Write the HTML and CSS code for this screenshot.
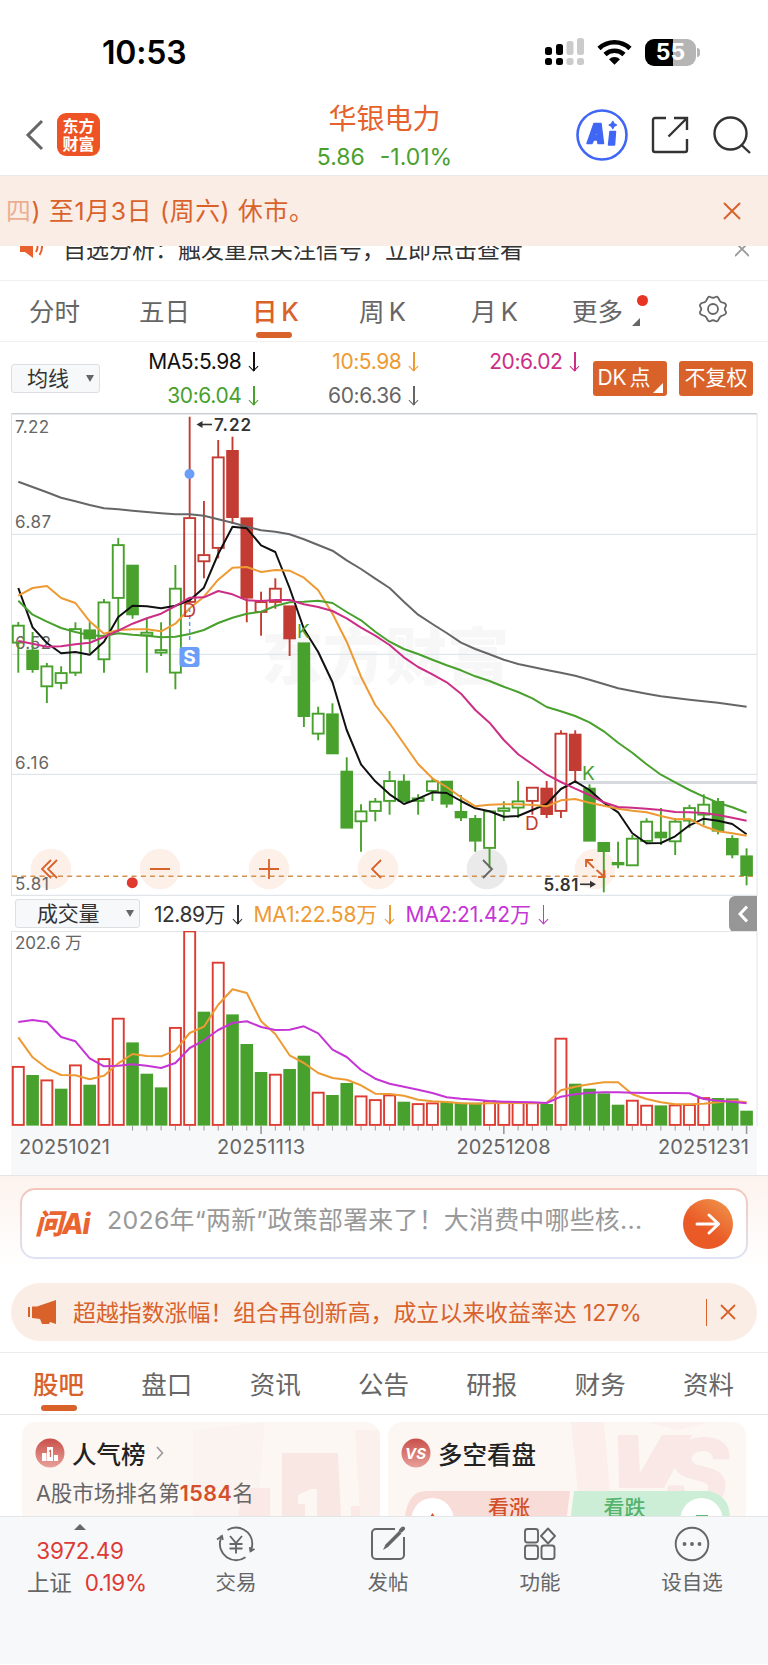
FILE: index.html
```html
<!DOCTYPE html>
<html lang="zh-CN">

<head>
  <meta charset="UTF-8">
  <meta name="viewport" content="width=device-width, initial-scale=1.0">
  <title>华银电力</title>
  <link rel="stylesheet" href="styles.css">
</head>

<body>
  <div class="status-bar">
    <span class="clock">10:53</span>
    <div class="status-icons">
      <svg width="40" height="28" viewBox="0 0 40 28">
        <g fill="#000">
          <rect x="0" y="9" width="7" height="8" rx="2.5" />
          <rect x="11" y="6" width="7" height="11" rx="2.5" />
          <rect x="0" y="20" width="7" height="7" rx="2.5" />
          <rect x="11" y="20" width="7" height="7" rx="2.5" />
        </g>
        <g fill="#cbcbcb">
          <rect x="21.500" y="3" width="7" height="14" rx="2.500" />
          <rect x="32" y="0" width="7" height="17" rx="2.500" />
          <rect x="21.500" y="20" width="7" height="7" rx="2.500" />
          <rect x="32" y="20" width="7" height="7" rx="2.500" />
        </g>
      </svg>
      <svg class="wifi" width="35" height="26" viewBox="0 0 35 26">
        <g fill="none" stroke="#000" stroke-width="4.600">
          <path d="M2 9.500a22.500 22.500 0 0 1 31 0" />
          <path d="M8 15.500a14 14 0 0 1 19 0" />
        </g>
        <path d="M12 20.200a8 8 0 0 1 11 0L17.500 25.800z" fill="#000" />
      </svg>
      <div class="battery"><span>55</span></div>
      <i class="battery-tip"></i>
    </div>
  </div>

  <header class="navbar">
    <div class="nav-left">
      <svg width="20" height="32" viewBox="0 0 20 32" fill="none" stroke="#666" stroke-width="3">
        <path d="M17 2L3 16l14 14" />
      </svg>
      <div class="logo">东方<br>财富</div>
    </div>
    <div class="stock">
      <h1>华银电力</h1>
      <p>5.86<span>-1.01%</span></p>
    </div>
    <div class="nav-right">
      <svg width="52" height="52" viewBox="0 0 52 52">
        <circle cx="26" cy="26" r="24.500" fill="none" stroke="#4066f5" stroke-width="2.600" />
        <g fill="#4066f5" stroke="#4066f5" stroke-width="1.500" stroke-linejoin="round">
          <path fill-rule="evenodd" d="M18 14.500h7l2.500 20h-5.500l-.5-3.500h-4l-1.500 3.500h-5zM20.800 20.500l-2 6h2.500z" />
          <path d="M34 22.500h5.500l-1 13.500h-6z" />
          <path d="M36.800 12.500l1.200 2.400 2.300 1.100-2.300 1.200-1.200 2.300-1.200-2.300-2.300-1.200 2.300-1.100z" />
        </g>
      </svg>
      <svg class="share" width="38" height="38" viewBox="0 0 38 38" fill="none" stroke="#333" stroke-width="2.400">
        <path d="M15 2H4a2 2 0 0 0-2 2v30a2 2 0 0 0 2 2h30a2 2 0 0 0 2-2V23" />
        <path d="M23 2h13v12M36 2L17.500 20.500" />
      </svg>
      <svg class="search" width="38" height="38" viewBox="0 0 38 38" fill="none" stroke="#333" stroke-width="2.400">
        <circle cx="17.500" cy="17.500" r="16" />
        <path d="M28.500 29L37 37" />
      </svg>
    </div>
  </header>

  <div class="notice">
    <p><span>四</span>) 至1月3日 (周六) 休市。</p>
    <svg width="18" height="18" viewBox="0 0 18 18" stroke="#d9622b" stroke-width="2">
      <path d="M1 1l16 16M17 1L1 17" />
    </svg>
  </div>

  <div class="ticker">
    <svg class="horn" width="24" height="24" viewBox="0 0 24 24">
      <path d="M0 7h5l8-6v22l-8-6H0z" fill="#e8612c" />
      <path d="M16 7q3 5 0 10M19.500 4q5 8 0 16" fill="none" stroke="#e8612c" stroke-width="2" />
    </svg>
    <p>自选分析：触发重点关注信号，立即点击查看</p>
    <svg width="14" height="18" viewBox="0 0 14 18" stroke="#999" stroke-width="1.800">
      <path d="M0 2l14 14M14 2L0 16" />
    </svg>
  </div>

  <nav class="period-tabs">
    <span>分时</span>
    <span>五日</span>
    <span class="active">日 K</span>
    <span>周 K</span>
    <span>月 K</span>
    <span class="more">更多</span>
    <svg width="30" height="28" viewBox="0 0 30 28" fill="none" stroke="#666" stroke-width="1.800" stroke-linejoin="round">
      <path d="M10 2.500q1-1.500 2.500-.5 2.500 1.500 5 0Q19 1 20 2.500l2 3.500q1 1.500 3 1.700 2 .3 2.700 1.600.8 1.500-.2 2.700-1.500 2 0 4 1 1.200.2 2.700-.7 1.300-2.700 1.600-2 .2-3 1.700l-2 3.500q-1 1.500-2.500.5-2.500-1.500-5 0Q11 27 10 25.500L8 22q-1-1.500-3-1.700-2-.3-2.700-1.600-.8-1.500.2-2.700 1.500-2 0-4-1-1.200-.2-2.700Q3 8 5 7.700 7 7.500 8 6z" />
      <circle cx="15" cy="14" r="5" />
    </svg>
  </nav>

  <div class="ma-bar">
    <div class="select">均线<i></i></div>
    <div class="ma-values">
      <span class="ma5">MA5:5.98<b></b></span>
      <span class="ma10">10:5.98<b></b></span>
      <span class="ma20">20:6.02<b></b></span>
      <span class="ma30">30:6.04<b></b></span>
      <span class="ma60">60:6.36<b></b></span>
    </div>
    <div class="btn dk">DK 点</div>
    <div class="btn">不复权</div>
  </div>

  <svg id="kline" class="chart" width="768" height="483" viewBox="0 413 768 483"></svg>

  <div class="vol-bar">
    <div class="select">成交量<i></i></div>
    <span class="vol">12.89万<b></b></span>
    <span class="ma10">MA1:22.58万<b></b></span>
    <span class="vma2">MA2:21.42万<b></b></span>
    <div class="collapse">
      <svg width="10" height="18" viewBox="0 0 10 18" fill="none" stroke="#fff" stroke-width="3">
        <path d="M9 1.500L2 9l7 7.500" />
      </svg>
    </div>
  </div>

  <svg id="volume" class="chart" width="768" height="244" viewBox="0 931 768 244"></svg>

  <section class="ask">
    <div class="ask-box">
      <div class="ask-logo">问Ai</div>
      <p>2026年“两新”政策部署来了！大消费中哪些核...</p>
      <div class="go">
        <svg width="26" height="24" viewBox="0 0 26 24" fill="none" stroke="#fff" stroke-width="3" stroke-linecap="round" stroke-linejoin="round">
          <path d="M2 12h21M14 3l9.500 9-9.500 9" />
        </svg>
      </div>
    </div>
  </section>

  <div class="promo">
    <svg width="28" height="24" viewBox="0 0 28 24" fill="#d9622b">
      <path d="M0 7h2v10H0zM4 6.500h5L28 0v24l-6-2-1 2h-7l-2-5-8-1z" />
    </svg>
    <p>超越指数涨幅！组合再创新高，成立以来收益率达 127%</p>
    <i></i>
    <svg width="16" height="16" viewBox="0 0 16 16" stroke="#d9622b" stroke-width="1.800">
      <path d="M1 1l14 14M15 1L1 15" />
    </svg>
  </div>

  <nav class="info-tabs">
    <span class="active">股吧</span>
    <span>盘口</span>
    <span>资讯</span>
    <span>公告</span>
    <span>研报</span>
    <span>财务</span>
    <span>资料</span>
  </nav>

  <section class="cards">
    <div class="card rank">
      <svg class="card-bg" width="358" height="96" viewBox="0 0 358 96">
        <path d="M171 8l72-8-8 96h-64z" fill="#fbf3ef" />
        <path fill-rule="evenodd" d="M260 31h56l3 65h-59zM276 73v9h7v14h12V67h-6z" fill="#f9e7e4" />
        <path d="M221 66h27v30h-32zM329 84h24v12h-24z" fill="#fae9e6" />
        <path d="M333 8h25v88h-20z" fill="#fbf0ec" />
      </svg>
      <h2>
        <svg width="30" height="30" viewBox="0 0 30 30">
          <circle cx="15" cy="15" r="14.500" fill="url(#badge)" />
          <path d="M7 15h4.500v8H7zM12 9h6v14h-6zM19 17h4v6h-4z" fill="#fff" />
          <path d="M14 13.500l1.500-1V19" fill="none" stroke="#d4655d" stroke-width="1.300" />
        </svg>
        人气榜
        <svg class="arrow" width="8" height="14" viewBox="0 0 8 14" fill="none" stroke="#999" stroke-width="1.600">
          <path d="M1 1l5.500 6L1 13" />
        </svg>
      </h2>
      <p>A股市场排名第<b>1584</b>名</p>
    </div>
    <div class="card vs">
      <svg class="card-bg" width="358" height="96" viewBox="0 0 358 96">
        <path d="M183 0h33l6 70h-32z" fill="#fbeeeb" />
        <path d="M258 0h64l-32 8z" fill="#fcf1ee" />
        <path d="M230 13h20l2 38 22-38h30l-28 53h-45z" fill="#f9e8e5" />
        <text x="277" y="87" class="bg-s">S</text>
      </svg>
      <h2>
        <svg width="30" height="30" viewBox="0 0 30 30">
          <circle cx="15" cy="15" r="14.500" fill="url(#badge)" />
          <text x="14.500" y="20.500" text-anchor="middle" class="badge-vs">VS</text>
        </svg>
        多空看盘
      </h2>
      <svg class="vote" width="326" height="28" viewBox="404 1490 326 28">
        <path d="M426 1491h144l-5 40H404q0-40 22-40z" fill="#f8dcd8" />
        <path d="M574 1491h134q22 4 22 27v12H569z" fill="#cdeed6" />
        <circle cx="432.500" cy="1519" r="21" fill="#fff" />
        <circle cx="701.500" cy="1519" r="21" fill="#fff" />
        <path d="M432.500 1513l5 8h-10z" fill="#d4502a" />
        <rect x="696" y="1515" width="12" height="6" fill="#62b877" />
        <text x="488" y="1515" fill="#d4502a">看涨</text>
        <text x="603.500" y="1515" fill="#55b36d">看跌</text>
      </svg>
    </div>
  </section>

  <footer class="bottom-bar">
    <div class="index">
      <i></i>
      <p>3972.49</p>
      <p class="change"><span>上证</span>0.19%</p>
    </div>
    <div class="item">
      <svg width="40" height="36" viewBox="0 0 40 36" fill="none" stroke="#666" stroke-width="1.900">
        <path d="M11.500 4A16.300 16.300 0 0 1 36.300 18q0 4-1.700 7.200M29.500 31.300A16.300 16.300 0 0 1 4.500 13.500l.7-3.800" />
        <path d="M38.500 23l-4 2.200-.7-4M1 13.500l5-3.500.8 4" />
        <path d="M14 10l6 7 6-7M13.500 18h13M13.500 22.500h13M20 17v10.500" />
      </svg>
      <span>交易</span>
    </div>
    <div class="item">
      <svg width="36" height="36" viewBox="0 0 36 36" fill="none" stroke="#666" stroke-width="2">
        <path d="M25 3H6a4 4 0 0 0-4 4v22a4 4 0 0 0 4 4h24a4 4 0 0 0 4-4V11" />
        <path d="M31 4.500l2-2" stroke-width="4" stroke-linecap="round" />
        <path d="M29 5l2.500 2.500L18 21l-5 3 2.500-5.500z" fill="#666" stroke="none" />
      </svg>
      <span>发帖</span>
    </div>
    <div class="item">
      <svg width="34" height="36" viewBox="0 0 34 36" fill="none" stroke="#666" stroke-width="1.900" stroke-linejoin="round">
        <rect x="2" y="3" width="13" height="13.500" rx="2.500" />
        <rect x="2" y="19.500" width="13" height="13.500" rx="2.500" />
        <rect x="18.500" y="19.500" width="13" height="13.500" rx="2.500" />
        <path d="M25 2.500l7 7.500-7 7.500-7-7.500z" />
      </svg>
      <span>功能</span>
    </div>
    <div class="item">
      <svg width="36" height="36" viewBox="0 0 36 36" fill="none" stroke="#666" stroke-width="1.900">
        <circle cx="18" cy="18" r="16.300" />
        <path d="M10.500 18h.01M18 18h.01M25.500 18h.01" stroke-width="3.800" stroke-linecap="round" />
      </svg>
      <span>设自选</span>
    </div>
  </footer>

  <svg class="defs" width="0" height="0">
    <linearGradient id="badge" x1="0" y1="0" x2="0" y2="1">
      <stop offset="0" stop-color="#c9504a" />
      <stop offset="1" stop-color="#e8a09a" />
    </linearGradient>
  </svg>

  <script src="script.js"></script>
</body>

</html>
```
FILE: styles.css
```css
* {
  margin: 0;
  padding: 0;
  box-sizing: border-box;
}

body {
  width: 768px;
  height: 1665px;
  overflow: hidden;
  background: #fff;
  color: #666;
  font-family: Inter, "Noto Sans CJK SC", sans-serif;
  font-size: 22px;
}

svg {
  display: block;
  flex: none;
}

.defs {
  position: absolute;
}

/* status bar */
.status-bar {
  display: flex;
  justify-content: space-between;
  align-items: center;
  height: 80px;
  padding: 24px 68px 0 102px;
}

.clock {
  color: #000;
  font-size: 32px;
  font-weight: 600;
  letter-spacing: -0.2px;
}

.status-icons {
  display: flex;
  align-items: center;
}

.wifi {
  margin: 0 13px 0 12px;
}

.battery {
  width: 51px;
  height: 27px;
  border-radius: 9px;
  background: linear-gradient(90deg, #000 55%, #b5b5b5 55%);
  color: #fff;
  font-size: 23px;
  font-weight: 700;
  line-height: 27px;
  text-align: center;
}

.battery-tip {
  width: 3px;
  height: 9px;
  margin-left: 1px;
  border-radius: 0 4px 4px 0;
  background: #b5b5b5;
}

/* navbar */
.navbar {
  display: grid;
  grid-template-columns: 1fr auto 1fr;
  align-items: center;
  height: 96px;
  padding: 14px 17px 0 25px;
  border-bottom: 1px solid #e9e9e9;
}

.nav-left,
.nav-right {
  display: flex;
  align-items: center;
}

.nav-right {
  justify-content: flex-end;
}

.logo {
  width: 43px;
  height: 43px;
  margin-left: 12px;
  padding-top: 3px;
  border-radius: 9px;
  background: #ed5325;
  color: #fff;
  font-family: "Noto Sans CJK SC", sans-serif;
  font-size: 16px;
  font-weight: 700;
  line-height: 18px;
  text-align: center;
}

.stock {
  margin-left: -7px;
  padding-top: 5px;
  text-align: center;
}

.stock h1 {
  color: #e5622c;
  font-size: 28px;
  font-weight: 400;
  line-height: 40px;
}

.stock p {
  color: #48a02d;
  font-size: 23px;
  line-height: 36px;
}

.stock span {
  margin-left: 15px;
}

.share {
  margin: 0 24px 0 23px;
}

/* scrolling notice */
.notice {
  display: flex;
  justify-content: space-between;
  align-items: center;
  height: 70px;
  padding: 0 27px 0 6px;
  background: #faede6;
  color: #d9622b;
  font-size: 24.8px;
  letter-spacing: 0.7px;
}

.notice p {
  margin-top: -5px;
}

.notice span {
  opacity: 0.45;
}

/* the row is partly covered by the notice above it */
.ticker {
  display: flex;
  align-items: flex-start;
  height: 35px;
  padding: 0 19px 0 20px;
  border-bottom: 1px solid #efefef;
  color: #333;
  overflow: hidden;
}

.ticker svg {
  margin-top: -6px;
}

.ticker .horn {
  margin-top: -11px;
}

.ticker p {
  flex: 1;
  margin: -13px 0 0 19px;
  font-size: 23px;
  line-height: 34px;
}

/* period tabs */
.period-tabs {
  display: flex;
  align-items: center;
  height: 61px;
  padding: 0 0 4px 29px;
  border-bottom: 1px solid #f1f1f1;
  font-size: 25.5px;
  word-spacing: -3px;
}

.period-tabs span {
  position: relative;
  width: 110px;
  white-space: nowrap;
}

.period-tabs span:nth-child(3) {
  width: 107px;
  margin-left: 3px;
}

.period-tabs span:nth-child(4) {
  width: 112px;
}

.period-tabs span:nth-child(5) {
  width: 101px;
}

.period-tabs .more {
  width: 126px;
}

.active {
  position: relative;
  color: #d9622b;
  font-weight: 500;
}

.active::after {
  content: "";
  position: absolute;
  left: 4px;
  bottom: -10px;
  width: 36px;
  height: 6px;
  border-radius: 3px;
  background: #d9622b;
}

.more::before {
  content: "";
  position: absolute;
  left: 65px;
  top: 4px;
  width: 11px;
  height: 11px;
  border-radius: 50%;
  background: #e93323;
}

.more::after {
  content: "";
  position: absolute;
  left: 60px;
  top: 27px;
  border: 4px solid transparent;
  border-right-color: #666;
  border-bottom-color: #666;
}

/* moving average row */
.ma-bar {
  display: flex;
  align-items: center;
  height: 71px;
  padding: 0 15px 0 11px;
}

.select {
  display: flex;
  justify-content: space-between;
  align-items: center;
  width: 89px;
  height: 29px;
  padding: 0 5px 0 15px;
  border: 1px solid #dcdfe3;
  border-radius: 3px;
  background: #f6f8fa;
  color: #333;
  font-size: 21px;
  line-height: 27px;
}

.ma-bar .select {
  margin-top: 2px;
}

.select i {
  border: 4px solid transparent;
  border-top: 7px solid #666;
  border-bottom: 0;
}

.ma-values {
  display: grid;
  grid-template-columns: 160px 160px 161px;
  row-gap: 8px;
  width: 481px;
  padding-top: 2px;
  text-align: right;
  font-size: 21px;
  line-height: 26px;
  letter-spacing: -0.4px;
}

.ma-values span,
.vol-bar span {
  white-space: nowrap;
}

/* thin down arrow after each value */
b {
  font-weight: inherit;
}

.ma-values b,
.vol-bar b {
  display: inline-block;
  position: relative;
  width: 1.6px;
  height: 19px;
  margin: 0 5px 0 12px;
  background: currentColor;
  vertical-align: -2px;
}

.ma-values b::after,
.vol-bar b::after {
  content: "";
  position: absolute;
  left: -3px;
  bottom: 1px;
  width: 6px;
  height: 6px;
  border: solid currentColor;
  border-width: 0 1.5px 1.5px 0;
  transform: rotate(45deg);
}

.ma5 {
  color: #111;
}

.ma10 {
  color: #ee9a33;
}

.ma20 {
  color: #cc2e86;
}

.ma30 {
  color: #48a02d;
}

.ma60 {
  color: #666;
}

.btn {
  position: relative;
  width: 74px;
  height: 35px;
  margin: 2px 0 0 12px;
  border-radius: 3px;
  background: #d9622b;
  color: #fff;
  font-size: 21px;
  line-height: 34px;
  text-align: center;
}

.dk {
  padding-right: 12px;
  word-spacing: -3px;
}

.dk::after {
  content: "";
  position: absolute;
  right: 4px;
  bottom: 3px;
  border: 5px solid transparent;
  border-right-color: #fff;
  border-bottom-color: #fff;
}

/* charts */
.chart text {
  font-family: Inter, "Noto Sans CJK SC", sans-serif;
  font-size: 17px;
  fill: #666;
}

.chart .mark {
  font-weight: 600;
  fill: #333;
}

.chart .date {
  font-size: 20px;
}

.chart .watermark {
  font-family: "Noto Sans CJK SC", sans-serif;
  font-size: 62px;
  font-weight: 900;
  fill: #f7f7f7;
}

.chart .flag-d {
  font-size: 19px;
  fill: #c23c33;
}

.chart .flag-k {
  font-size: 19px;
  fill: #48a02d;
}

.chart .flag-s {
  font-weight: 700;
  font-size: 19px;
  fill: #fff;
}

/* volume header */
.vol-bar {
  display: flex;
  align-items: center;
  height: 35px;
  padding: 0 11px 0 15px;
  font-size: 21px;
  letter-spacing: -0.2px;
}

.vol-bar .select {
  width: 125px;
  padding-left: 21px;
  margin-right: 14px;
}

.vol-bar span {
  margin: -2px 10px 0 0;
}

.vol-bar .vol {
  color: #333;
  letter-spacing: -0.5px;
}

.vma2 {
  color: #c535d6;
}

.collapse {
  display: flex;
  justify-content: center;
  align-items: center;
  width: 28px;
  height: 36px;
  margin-left: auto;
  border-radius: 6px 0 0 6px;
  background: #969696;
}

/* AI question box */
.ask {
  height: 95px;
  padding: 12px 20px 0;
  border-top: 1px solid #e5e5e8;
  background: linear-gradient(#fdf3ee, #fff);
}

.ask-box {
  display: flex;
  align-items: center;
  height: 71px;
  padding: 0 13px;
  border: 2px solid transparent;
  border-radius: 15px;
  background: linear-gradient(#fff, #fff) padding-box, linear-gradient(#f5c5bb, #dde4f5) border-box;
}

.ask-logo {
  width: 60px;
  margin-top: -4px;
  color: #ea6430;
  font-size: 28px;
  font-weight: 800;
  font-style: italic;
  letter-spacing: -1px;
  white-space: nowrap;
}

.ask-box p {
  flex: 1;
  margin: -12px 0 0 12px;
  color: #999;
  font-size: 24.9px;
  letter-spacing: 0.28px;
  white-space: nowrap;
}

.go {
  display: flex;
  justify-content: center;
  align-items: center;
  width: 50px;
  height: 50px;
  border-radius: 50%;
  background: linear-gradient(35deg, #ea5a26 40%, #f0994f);
}

/* promo pill */
.promo {
  display: flex;
  align-items: center;
  height: 58px;
  margin: 13px 11px 11px;
  padding: 0 21px 0 17px;
  border-radius: 29px;
  background: #faede6;
  color: #d9622b;
  font-size: 22.9px;
}

.promo p {
  flex: 1;
  margin: -3px 0 0 17px;
  white-space: nowrap;
}

.promo i {
  width: 1.5px;
  height: 27px;
  margin-right: 13px;
  background: #d9622b;
}

/* info tabs */
.info-tabs {
  display: flex;
  justify-content: space-between;
  align-items: center;
  height: 63px;
  padding: 0 34px 3px 33px;
  border-top: 1px solid #ececf1;
  border-bottom: 1px solid #e6e6e6;
  font-size: 25.5px;
}

.info-tabs .active::after {
  left: 8px;
}

/* cards, cut off by the bottom bar */
.cards {
  display: flex;
  gap: 8px;
  height: 101px;
  padding: 7px 22px 0;
  overflow: hidden;
}

.card {
  position: relative;
  width: 358px;
  height: 120px;
  padding: 14px 14px 0;
  border-radius: 14px;
  background: #fdf7f4;
  overflow: hidden;
}

.card-bg {
  position: absolute;
  left: 0;
  top: 0;
}

.bg-s {
  font-size: 98px;
  font-weight: 800;
  font-style: italic;
  fill: #f9e8e5;
}

.badge-vs {
  font-size: 15px;
  font-weight: 700;
  font-style: italic;
  fill: #fff;
}

.card h2 {
  display: flex;
  position: relative;
  align-items: center;
  gap: 7px;
  height: 34px;
  margin-left: -1px;
  color: #222;
  font-size: 24.5px;
  font-weight: 500;
}

.arrow {
  margin-left: 3px;
}

.card p {
  position: relative;
  margin-top: 7px;
  font-size: 21.5px;
  line-height: 32px;
}

.card p b {
  color: #d4502a;
  font-weight: 600;
  letter-spacing: 0.4px;
}

.vote {
  position: relative;
  margin: 20px 0 0 2px;
}

.vote text {
  font-size: 21px;
  font-weight: 500;
}

/* bottom bar */
.bottom-bar {
  display: flex;
  height: 148px;
  border-top: 1px solid #e4e6e8;
  background: #f6f8fa;
  font-size: 20.5px;
}

.index {
  width: 160px;
  text-align: center;
  color: #dd3a36;
  font-size: 22.5px;
  letter-spacing: -0.2px;
}

.index i {
  display: block;
  width: 12px;
  margin: 7px auto 5px;
  border: 6px solid transparent;
  border-bottom-color: #666;
  border-top: 0;
}

.index p {
  height: 32px;
  line-height: 32px;
}

.index .change {
  padding-left: 14px;
}

.index span {
  margin-right: 13px;
  color: #666;
}

.item {
  display: flex;
  flex-direction: column;
  align-items: center;
  width: 152px;
  padding-top: 9px;
}

.item span {
  margin-top: 7px;
  line-height: 28px;
}
```
FILE: script.js
```js
const GREEN = '#48a02d';
const RED = '#c23c33';
const STEP = 14.28;
const LEFT = 18.3;

// [color, filled, high, body top, body bottom, low, volume top]
const bars = [
  ['g', 0, 622, 625.3, 643, 672.7, 1066.5],
  ['g', 1, 632, 650, 669.7, 672.7, 1075.3],
  ['g', 0, 663, 666, 686.7, 703, 1080],
  ['g', 0, 666.3, 672.7, 683.3, 689.3, 1089],
  ['g', 0, 622.3, 628.7, 673, 676, 1065],
  ['g', 1, 622.3, 629.7, 639, 653, 1085],
  ['g', 0, 599, 602, 659.7, 672.7, 1058.7],
  ['g', 0, 538, 544.7, 598.3, 632, 1018.3],
  ['g', 1, 565, 565, 615, 618.7, 1042.7],
  ['g', 0, 618.7, 632.3, 635.7, 672.7, 1074],
  ['g', 0, 622.3, 649.7, 653, 656, 1087.7],
  ['g', 0, 565, 588.3, 673, 689.3, 1027.5],
  ['r', 0, 416.7, 517.7, 602.3, 602.3, 931],
  ['r', 0, 501, 554.7, 561.7, 578.3, 1012],
  ['r', 0, 440, 457, 548.3, 558.3, 962.3],
  ['r', 1, 436.7, 450.3, 517.7, 524, 1014.7],
  ['r', 1, 517.7, 517.7, 598.3, 622.3, 1044.3],
  ['r', 0, 591.7, 601.7, 612.3, 635.7, 1072.3],
  ['r', 0, 578.3, 588.3, 602.3, 608.7, 1074.3],
  ['r', 1, 605.7, 605.7, 639, 656, 1069.3],
  ['g', 1, 642.7, 642.7, 716.7, 727, 1056],
  ['g', 0, 706.7, 713.3, 734, 740.3, 1092.3],
  ['g', 1, 703.3, 713.7, 754, 754, 1095.3],
  ['g', 1, 757.3, 771, 828.3, 828.3, 1083.3],
  ['g', 0, 804.3, 811, 821.7, 851.7, 1096],
  ['g', 0, 798, 801.3, 811.3, 821.3, 1099.7],
  ['g', 0, 771, 780.7, 801.3, 814.7, 1095],
  ['g', 1, 774.3, 781, 801.7, 801.7, 1102],
  ['g', 0, 794.3, 798, 801.3, 814.7, 1103.7],
  ['g', 0, 778, 781, 791.3, 801, 1103],
  ['g', 1, 781, 781, 804.3, 807.7, 1102],
  ['g', 1, 795, 811.3, 818, 821, 1103],
  ['g', 1, 815, 818.3, 841.3, 851.7, 1103],
  ['g', 0, 811, 811, 848.3, 868.3, 1101],
  ['g', 0, 801.3, 808, 811.3, 821, 1102.7],
  ['g', 0, 781, 801, 808, 818, 1102.7],
  ['r', 0, 787.3, 787.3, 801.3, 814.7, 1102.7],
  ['r', 1, 781, 788, 814.7, 818, 1104.3],
  ['r', 0, 730.3, 733.3, 811.3, 818, 1038.3],
  ['r', 1, 730.3, 734, 770.7, 781.7, 1084],
  ['g', 1, 784.3, 788, 841.3, 841.3, 1089],
  ['g', 1, 842.3, 842.3, 851.7, 892.3, 1093.7],
  ['g', 1, 841.7, 862.3, 865, 868.3, 1105],
  ['g', 0, 835, 838.3, 865.7, 865.7, 1100.3],
  ['g', 0, 818.3, 821.3, 841.3, 844.3, 1105.3],
  ['g', 1, 808, 832, 838, 845, 1105.7],
  ['g', 0, 818.3, 821.3, 841.7, 855, 1105],
  ['g', 0, 804.7, 807.7, 821, 828, 1104.7],
  ['g', 0, 794.3, 804.3, 815, 825, 1097.7],
  ['g', 1, 798, 801.3, 831.3, 834.3, 1098.3],
  ['g', 1, 835.3, 838.3, 855, 858.3, 1098.7],
  ['g', 1, 848.3, 855.7, 875.7, 885.3, 1111]
];

// bars of the volume chart that are drawn hollow
const volumeUp = [0, 2, 4, 6, 7, 11, 12, 14, 18, 21, 24, 25, 26, 28, 29, 33, 34, 35, 36, 38, 43, 44, 46, 47, 48];

const ma = {
  '#666': [481.7, 487, 492.3, 497.7, 501.3, 505, 508.3, 509.3, 510.7, 512, 513.3, 514.3, 514.3, 515.7, 519.3, 522.7, 526.7, 530.3, 531.7, 534.3, 539.3, 545, 550.7, 560.3, 569, 578.7, 588, 601.7, 614.7, 624, 633, 642.7, 649, 654.3, 659.7, 664, 667, 670, 672.7, 675.7, 679.7, 684, 688.3, 691, 693.7, 696.3, 698, 699.7, 701.3, 702.7, 704.7, 706.7],
  '#111': [588, 627.3, 643, 653.3, 652, 654.7, 641.7, 617, 605.7, 606.3, 608.3, 605.7, 600.3, 587.7, 554, 526.7, 528.3, 545.3, 552, 588, 629, 652, 682.3, 730, 764.3, 781.3, 794.3, 804, 798.7, 792.3, 793, 801, 808.3, 811.3, 816.7, 816, 810, 804, 789, 781.3, 790, 802.7, 812.3, 833.3, 843.3, 843, 836.3, 825.3, 818.7, 820.7, 824, 834.3],
  '#ee9a33': [595.7, 588, 586, 598, 603, 621.3, 633.7, 630, 629.3, 629.3, 631.3, 623.7, 608.3, 596.7, 579.7, 567.7, 567, 572, 570, 570.7, 577.7, 590.3, 613.7, 641.7, 676.7, 705, 723.3, 743.7, 764, 778.3, 787, 797.3, 806.3, 804.7, 804.3, 804.3, 805, 806.3, 800.3, 799, 802.7, 805.7, 808.7, 810.7, 812.3, 816, 819.3, 819, 826.3, 831.3, 833.3, 835.7],
  '#48a02d': [600.7, 614.7, 621.7, 628, 632, 635.3, 636, 633.3, 634.7, 635.7, 637.3, 636.7, 634, 630, 623, 617.7, 613.7, 611.7, 606, 602.3, 601.7, 600.7, 603, 612, 620.3, 631.7, 641.7, 649, 654, 659.7, 665.3, 670.3, 676.3, 681, 686.7, 692, 698.3, 707, 711.3, 716, 722.3, 731.3, 742.7, 752.7, 764.3, 774.7, 782.3, 790, 796.7, 802.7, 807.3, 812.7],
  '#cc2e86': [641, 643.7, 646.7, 646.3, 644.3, 642.7, 637, 630.7, 623.7, 618.3, 613.7, 606, 597.7, 597.3, 591, 594.3, 600.3, 601, 600, 600, 604.3, 607, 611, 618.3, 627.7, 635.7, 645, 657.3, 667, 674.3, 682.3, 693.7, 710, 722.7, 740, 754.3, 764.3, 774.7, 782, 788.7, 795, 802.3, 807, 807.7, 808.7, 810, 812, 812.3, 813, 815, 817.7, 820.7]
};

// volume averages, thirds of a pixel from y = 890
const vma = {
  '#ee9a33': [442, 502, 535, 555, 556, 568, 557, 520, 492, 498, 499, 481, 429, 410, 344, 298, 309, 394, 432, 496, 519, 549, 564, 569, 586, 611, 612, 617, 629, 634, 636, 640, 641, 640, 639, 639, 640, 638, 601, 590, 583, 577, 577, 613, 627, 637, 643, 643, 641, 637, 632, 637],
  '#c535d6': [396, 390, 396, 441, 454, 505, 529, 527, 523, 527, 534, 519, 474, 451, 420, 399, 394, 411, 420, 419, 409, 430, 479, 501, 540, 566, 581, 590, 599, 609, 622, 626, 629, 633, 635, 636, 637, 639, 620, 613, 608, 607, 607, 608, 609, 609, 609, 610, 627, 632, 635, 640]
};

const x = i => LEFT + i * STEP;

function line(x1, y1, x2, y2, color, width = 1, extra = '') {
  return `<line x1="${x1}" y1="${y1}" x2="${x2}" y2="${y2}" stroke="${color}" stroke-width="${width}" ${extra}/>`;
}

function curve(ys, color) {
  const points = ys.map((y, i) => `${x(i).toFixed(1)},${y.toFixed(1)}`).join(' ');
  return `<polyline points="${points}" fill="none" stroke="${color}" stroke-width="2" stroke-linejoin="round"/>`;
}

function body(cx, top, bottom, color, filled) {
  if (filled) {
    return `<rect x="${cx - 6.3}" y="${top - 0.3}" width="12.6" height="${bottom - top + 0.6}" fill="${color}"/>`;
  }
  return `<rect x="${cx - 5.5}" y="${top + 0.4}" width="11" height="${Math.max(bottom - top - 0.8, 2)}" fill="none" stroke="${color}" stroke-width="1.9"/>`;
}

function text(tx, ty, value, cls = '', length = 0) {
  const fit = length ? `textLength="${length}"` : '';
  return `<text x="${tx}" y="${ty}" class="${cls}" ${fit}>${value}</text>`;
}

function drawKline() {
  let out = text(261, 680, '东方财富', 'watermark');
  out += line(11, 413.7, 757, 413.7, '#ccd0d4', 1.4);
  [534.3, 654.3, 774.3, 895.3].forEach(y => out += line(11, y, 757, y, '#dfe5eb', 1.2));
  out += line(11.5, 413, 11.5, 896, '#dfe3e7') + line(757, 413, 757, 896, '#dfe3e7');

  // round tool buttons
  [51, 160, 269, 378, 487, 595].forEach((cx, i) => {
    out += `<circle cx="${cx}" cy="869" r="20.3" fill="${i === 4 ? '#e6e6e6' : '#fcede5'}" fill-opacity="0.85"/>`;
  });

  out += text(15, 432.5, '7.22', '', 34);
  out += text(15, 528, '6.87', '', 36);
  out += text(15, 648.5, '6.52', '', 36);
  out += text(15, 769, '6.16', '', 34);
  out += text(15, 889.5, '5.81', '', 34);

  out += line(575, 782.5, 757, 782.5, '#d6dade', 3);
  out += line(12, 876.3, 757, 876.3, '#d2914f', 1.5, 'stroke-dasharray="5 4.2"');

  bars.forEach(([c, filled, high, top, bottom, low], i) => {
    const color = c === 'g' ? GREEN : RED;
    out += line(x(i), high, x(i), top, color, 1.9) + line(x(i), bottom, x(i), low, color, 1.9);
    out += body(x(i), top, bottom, color, filled);
  });
  Object.keys(ma).forEach(color => out += curve(ma[color], color));

  out += `<g fill="none" stroke="#d9622b" stroke-width="1.8">
    <path d="M51 860l-9 9 9 9M57 860l-9 9 9 9M150 869h20M259 869h20M269 859v20M381 860l-9 9 9 9"/>
    <path d="M586 867v-7h7M586 860l8 8M598 877h6.500v-7M604.500 877l-8-7"/>
    <path d="M483 860l9 9-9 9" stroke="#666"/>
  </g>`;
  out += '<circle cx="132.300" cy="882.700" r="5.500" fill="#e03a30"/>';

  // trade marks
  out += line(x(12), 608, x(12), 642, '#5f96f5', 1.5, 'stroke-dasharray="4 3"');
  out += '<circle cx="189.500" cy="474" r="5" fill="#6a9ef8"/>';
  out += '<rect x="179.500" y="647" width="20" height="20" rx="3" fill="#6a9ef8"/>';
  out += text(183.3, 664, 'S', 'flag-s');
  out += text(182.5, 617, 'D', 'flag-d') + text(525, 830, 'D', 'flag-d');
  out += text(297, 638, 'K', 'flag-k') + text(582, 780, 'K', 'flag-k');

  out += line(199, 424.5, 212, 424.5, '#333', 1.6) + '<path d="M196.500 424.500l6-3.500v7z" fill="#333"/>';
  out += text(214, 431, '7.22', 'mark', 37);
  out += text(543.5, 890.5, '5.81', 'mark', 35);
  out += line(580, 884.3, 593, 884.3, '#333', 1.6) + '<path d="M596 884.300l-6-3.500v7z" fill="#333"/>';
  document.getElementById('kline').innerHTML = out;
}

function drawVolume() {
  let out = '<rect x="11" y="1125.500" width="746" height="50" fill="#f7f8fa"/>';
  out += line(11, 931.5, 757, 931.5, '#e4e6e8', 1.2);
  out += line(11.5, 931, 11.5, 1126, '#dfe3e7') + line(757, 931, 757, 1126, '#dfe3e7');
  out += text(15, 948.5, '202.6 万', '', 67);

  bars.forEach((bar, i) => {
    const up = volumeUp.includes(i);
    out += body(x(i), bar[6], 1125.3, up ? '#dc3c32' : GREEN, !up);
    if (i >= 8) {
      const big = i === 17 || i === 34 || i === 51;
      out += line(x(i), 1126, x(i), big ? 1134 : 1130.5, '#999', big ? 1.6 : 1);
    }
  });
  Object.keys(vma).forEach(color => out += curve(vma[color].map(y => 890 + y / 3), color));

  out += text(19, 1153.5, '20251021', 'date', 91);
  out += text(217, 1153.5, '20251113', 'date', 88);
  out += text(456.5, 1153.5, '20251208', 'date', 94);
  out += text(658, 1153.5, '20251231', 'date', 91);
  document.getElementById('volume').innerHTML = out;
}

drawKline();
drawVolume();
```
